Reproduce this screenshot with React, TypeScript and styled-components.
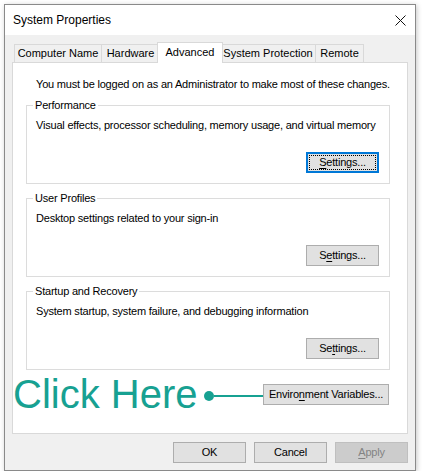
import React from "react";
import styled, { createGlobalStyle } from "styled-components";

const GlobalStyle = createGlobalStyle`
  html, body { margin: 0; padding: 0; background: #ffffff; }
  body { font-family: "Liberation Sans", Arial, sans-serif; font-size: 11px; color: #000; letter-spacing: -0.2px; }
  * { box-sizing: border-box; }
`;

const Window = styled.div`
  margin: 4px 0 0 4px;
  width: 412px;
  height: 467px;
  border: 1px solid #8a8a8a;
  box-shadow: 1px 1px 5px rgba(0, 0, 0, 0.22);
  display: flex;
  flex-direction: column;
  background: #f0f0f0;
`;

const TitleBar = styled.div`
  height: 30px;
  background: #ffffff;
  display: flex;
  align-items: center;
  justify-content: space-between;
  padding: 0 9px 0 8px;
`;

const Title = styled.span`
  font-size: 12px;
  line-height: 16px;
  letter-spacing: 0;
`;

const CloseButton = styled.span`
  width: 12px;
  height: 12px;
  display: flex;
  align-items: center;
  justify-content: center;
`;

const Body = styled.div`
  flex: 1;
  display: flex;
  flex-direction: column;
  padding: 7px;
`;

const TabRow = styled.div`
  display: flex;
  align-items: flex-end;
  height: 21px;
  margin: 0 0 -1px 2px;
  position: relative;
  z-index: 1;
`;

const Tab = styled.div<{ $w: number; $active?: boolean }>`
  width: ${(p) => (p.$active ? p.$w + 4 : p.$w)}px;
  height: ${(p) => (p.$active ? 21 : 19)}px;
  margin: 0 ${(p) => (p.$active ? -3 : -1)}px 0 ${(p) => (p.$active ? -2 : 0)}px;
  border: 1px solid #d9d9d9;
  border-bottom: ${(p) => (p.$active ? "none" : "1px solid #d9d9d9")};
  background: ${(p) => (p.$active ? "#ffffff" : "#f0f0f0")};
  position: relative;
  z-index: ${(p) => (p.$active ? 2 : 1)};
  display: flex;
  justify-content: center;
  padding-top: ${(p) => (p.$active ? 2 : 1)}px;
  line-height: 15px;
  white-space: nowrap;
  letter-spacing: 0;
`;

const Panel = styled.div`
  height: 372px;
  background: #ffffff;
  border: 1px solid #d9d9d9;
  display: flex;
  flex-direction: column;
  padding-top: 13px;
`;

const Notice = styled.div`
  text-align: center;
  line-height: 16px;
  padding-left: 6px;
  white-space: nowrap;
`;

const GroupList = styled.div`
  display: flex;
  flex-direction: column;
  gap: 14px;
  margin: 13px 17px 0 13px;
`;

const Group = styled.div`
  position: relative;
  border: 1px solid #dcdcdc;
  display: flex;
  flex-direction: column;
  padding: 11px 10px 10px 9px;
`;

const Legend = styled.span`
  position: absolute;
  top: -9px;
  left: 6px;
  padding: 0 2px;
  background: #ffffff;
  line-height: 16px;
`;

const Description = styled.div`
  line-height: 16px;
  white-space: nowrap;
`;

const Button = styled.button<{ $w: number; $focused?: boolean }>`
  width: ${(p) => p.$w}px;
  height: 21px;
  padding: 0;
  margin: 0;
  font-family: inherit;
  font-size: 11px;
  letter-spacing: inherit;
  color: #000;
  background: #e1e1e1;
  border: 1px solid ${(p) => (p.$focused ? "#0078d7" : "#adadad")};
  box-shadow: ${(p) => (p.$focused ? "inset 0 0 0 1px #0078d7" : "none")};
  outline: ${(p) => (p.$focused ? "1px dotted #000" : "none")};
  outline-offset: -4px;
  display: flex;
  align-items: center;
  justify-content: center;
  line-height: 15px;
  white-space: nowrap;
  flex: none;
  cursor: default;
  &:disabled {
    background: #cccccc;
    border-color: #bfbfbf;
    color: #838383;
  }
`;

const GroupButton = styled(Button)`
  align-self: flex-end;
  margin-top: 19px;
`;

const Key = styled.span`
  text-decoration: underline;
  text-underline-offset: 2px;
`;

const ActionRow = styled.div`
  display: flex;
  align-items: center;
  height: 40px;
  margin-top: 4px;
  padding-right: 18px;
`;

const ClickHere = styled.span`
  font-family: "Liberation Sans", Arial, sans-serif;
  font-size: 40px;
  line-height: 40px;
  letter-spacing: 0;
  color: #17a192;
  white-space: nowrap;
`;

const Connector = styled.div`
  flex: 1;
  display: flex;
  align-items: center;
  margin: 3px 0 0 7px;
`;

const Dot = styled.span`
  width: 10px;
  height: 10px;
  border-radius: 50%;
  background: #17a192;
  flex: none;
`;

const Line = styled.span`
  flex: 1;
  height: 2px;
  background: #17a192;
`;

const Footer = styled.div`
  display: flex;
  justify-content: flex-end;
  gap: 8px;
  margin-top: 8px;
`;

type GroupData = {
  title: string;
  text: string;
  label: [string, string, string];
  focused?: boolean;
};

const groups: GroupData[] = [
  {
    title: "Performance",
    text: "Visual effects, processor scheduling, memory usage, and virtual memory",
    label: ["", "S", "ettings..."],
    focused: true,
  },
  {
    title: "User Profiles",
    text: "Desktop settings related to your sign-in",
    label: ["S", "e", "ttings..."],
  },
  {
    title: "Startup and Recovery",
    text: "System startup, system failure, and debugging information",
    label: ["Se", "t", "tings..."],
  },
];

const tabs = [
  { name: "Computer Name", w: 88 },
  { name: "Hardware", w: 59 },
  { name: "Advanced", w: 62, active: true },
  { name: "System Protection", w: 96 },
  { name: "Remote", w: 49 },
];

export default function App() {
  return (
    <>
      <GlobalStyle />
      <Window>
        <TitleBar>
          <Title>System Properties</Title>
          <CloseButton>
            <svg width="11" height="11" viewBox="0 0 11 11">
              <path d="M0.5 0.5 L10.5 10.5 M10.5 0.5 L0.5 10.5" stroke="#111" strokeWidth="1" fill="none" />
            </svg>
          </CloseButton>
        </TitleBar>
        <Body>
          <TabRow>
            {tabs.map((t) => (
              <Tab key={t.name} $w={t.w} $active={t.active}>
                {t.name}
              </Tab>
            ))}
          </TabRow>
          <Panel>
            <Notice>You must be logged on as an Administrator to make most of these changes.</Notice>
            <GroupList>
              {groups.map((g) => (
                <Group key={g.title}>
                  <Legend>{g.title}</Legend>
                  <Description>{g.text}</Description>
                  <GroupButton $w={73} $focused={g.focused}>
                    <span>
                      {g.label[0]}
                      <Key>{g.label[1]}</Key>
                      {g.label[2]}
                    </span>
                  </GroupButton>
                </Group>
              ))}
            </GroupList>
            <ActionRow>
              <ClickHere>Click Here</ClickHere>
              <Connector>
                <Dot />
                <Line />
              </Connector>
              <Button $w={126}>
                <span>
                  Enviro<Key>n</Key>ment Variables...
                </span>
              </Button>
            </ActionRow>
          </Panel>
          <Footer>
            <Button $w={73}>OK</Button>
            <Button $w={73}>Cancel</Button>
            <Button $w={73} disabled>
              <span>
                <Key>A</Key>pply
              </span>
            </Button>
          </Footer>
        </Body>
      </Window>
    </>
  );
}
